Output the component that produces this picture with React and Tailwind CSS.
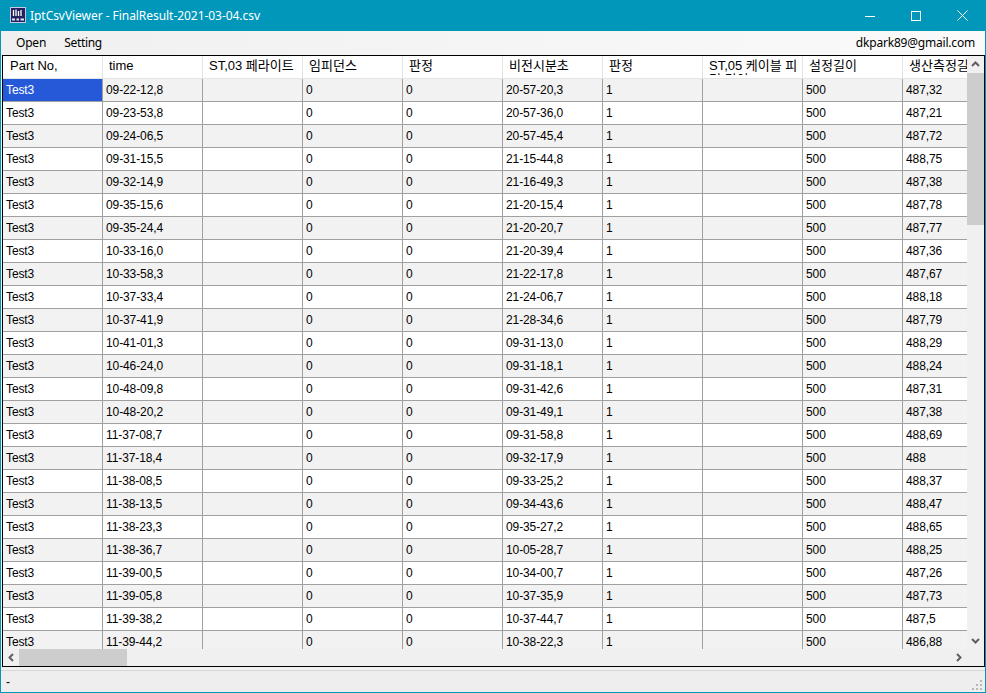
const COLS = ['Part No,', 'time', 'ST,03 페라이트', '임피던스', '판정', '비전시분초', '판정', 'ST,05 케이블 피더 길이', '설정길이', '생산측정길이'];

const ROWS = [
  ['09-22-12,8', '20-57-20,3', '487,32'],
  ['09-23-53,8', '20-57-36,0', '487,21'],
  ['09-24-06,5', '20-57-45,4', '487,72'],
  ['09-31-15,5', '21-15-44,8', '488,75'],
  ['09-32-14,9', '21-16-49,3', '487,38'],
  ['09-35-15,6', '21-20-15,4', '487,78'],
  ['09-35-24,4', '21-20-20,7', '487,77'],
  ['10-33-16,0', '21-20-39,4', '487,36'],
  ['10-33-58,3', '21-22-17,8', '487,67'],
  ['10-37-33,4', '21-24-06,7', '488,18'],
  ['10-37-41,9', '21-28-34,6', '487,79'],
  ['10-41-01,3', '09-31-13,0', '488,29'],
  ['10-46-24,0', '09-31-18,1', '488,24'],
  ['10-48-09,8', '09-31-42,6', '487,31'],
  ['10-48-20,2', '09-31-49,1', '487,38'],
  ['11-37-08,7', '09-31-58,8', '488,69'],
  ['11-37-18,4', '09-32-17,9', '488'],
  ['11-38-08,5', '09-33-25,2', '488,37'],
  ['11-38-13,5', '09-34-43,6', '488,47'],
  ['11-38-23,3', '09-35-27,2', '488,65'],
  ['11-38-36,7', '10-05-28,7', '488,25'],
  ['11-39-00,5', '10-34-00,7', '487,26'],
  ['11-39-05,8', '10-37-35,9', '487,73'],
  ['11-39-38,2', '10-37-44,7', '487,5'],
  ['11-39-44,2', '10-38-22,3', '486,88'],
];

function Cell({ children, selected }) {
  return (
    <div className={`w-[100px] h-[22px] shrink-0 border-r border-[#a0a0a0] pl-[3px] leading-[22px] tracking-[-0.1px] whitespace-nowrap overflow-hidden ${selected ? 'bg-[#2559d8] text-white' : ''}`}>
      {children}
    </div>
  );
}

function Chevron({ d }) {
  return (
    <svg width="9" height="9" viewBox="0 0 9 9">
      <path d={d} fill="none" stroke="#606060" strokeWidth="2" />
    </svg>
  );
}

export default function App() {
  return (
    <div className="w-[986px] h-[693px] overflow-hidden flex flex-col border border-[#0097bb] border-t-0 bg-[#f0f0f0] text-xs text-black font-['Liberation_Sans','Noto_Sans_CJK_KR',sans-serif]">
      <div className="h-[31px] shrink-0 -mx-px bg-[#0097bb] flex items-center text-white">
        <svg width="16" height="16" viewBox="0 0 16 16" className="ml-[10px] mr-[4px] mb-px">
          <rect x="0.5" y="0.5" width="15" height="15" fill="#23235f" stroke="#c8c8e0" />
          <path d="M3.5 9V3M6 9V2.5M8.5 9V4M11 9V3" stroke="#fff" strokeWidth="1.3" />
          <path d="M2 12.5h3M6.5 12.5h2.5M10.5 12.5h3.5" stroke="#dfe6ff" strokeWidth="2" />
        </svg>
        <span className="font-['Noto_Sans',sans-serif] text-[12px] tracking-[-0.05px]">IptCsvViewer - FinalResult-2021-03-04.csv</span>
        <div className="ml-auto flex items-center h-full mr-px">
          <div className="w-[46px] h-full flex items-center justify-center">
            <svg width="10" height="10" viewBox="0 0 10 10"><path d="M0 5.5h10" stroke="#fff" /></svg>
          </div>
          <div className="w-[46px] h-full flex items-center justify-center">
            <svg width="10" height="10" viewBox="0 0 10 10"><rect x="0.5" y="0.5" width="9" height="9" fill="none" stroke="#fff" /></svg>
          </div>
          <div className="w-[46px] h-full flex items-center justify-center">
            <svg width="11" height="11" viewBox="0 0 11 11"><path d="M0.5 0.5l10 10M10.5 0.5l-10 10" stroke="#fff" /></svg>
          </div>
        </div>
      </div>

      <div className="h-[24px] shrink-0 flex items-center bg-gradient-to-r from-[#f0f0f0] to-[#fafafa] font-['Noto_Sans',sans-serif] tracking-[-0.2px]">
        <span className="ml-[15px]">Open</span>
        <span className="ml-[18px] tracking-[-0.3px]">Setting</span>
        <span className="ml-auto mr-[10px]">dkpark89@gmail.com</span>
      </div>

      <div className="ml-px h-[612px] shrink-0 flex flex-col border border-black bg-[#f0f0f0]">
        <div className="flex flex-1 min-h-0">
          <div className="flex-1 min-w-0 overflow-hidden bg-white">
            <div className="flex h-[23px] border-b border-[#e4e4e4]">
              {COLS.map((c, i) => (
                <div key={c} className={`w-[100px] h-[22px] shrink-0 border-r border-[#e4e4e4] pr-[3px] pt-[3px] ${i === 0 ? 'pl-[7px]' : 'pl-[6px]'}`}>
                  <div className="h-[16px] overflow-hidden text-[13px] leading-[14px]">{c}</div>
                </div>
              ))}
            </div>
            {ROWS.map((r, i) => (
              <div key={r[0]} className={`flex h-[23px] border-b border-[#a0a0a0] ${i % 2 === 0 ? 'bg-[#f2f2f2]' : 'bg-white'}`}>
                <Cell selected={i === 0}>Test3</Cell>
                <Cell>{r[0]}</Cell>
                <Cell />
                <Cell>0</Cell>
                <Cell>0</Cell>
                <Cell>{r[1]}</Cell>
                <Cell>1</Cell>
                <Cell />
                <Cell>500</Cell>
                <Cell>{r[2]}</Cell>
              </div>
            ))}
          </div>
          <div className="w-[17px] shrink-0 flex flex-col bg-[#f0f0f0]">
            <div className="h-[17px] flex items-center justify-center"><Chevron d="M1 6l3.5-3.5L8 6" /></div>
            <div className="flex-1">
              <div className="h-[152px] bg-[#cdcdcd]" />
            </div>
            <div className="h-[17px] flex items-center justify-center"><Chevron d="M1 3l3.5 3.5L8 3" /></div>
          </div>
        </div>
        <div className="h-[17px] shrink-0 flex items-center bg-[#f0f0f0]">
          <div className="w-[16px] flex items-center justify-center"><Chevron d="M6 1L2.5 4.5L6 8" /></div>
          <div className="w-[108px] h-full bg-[#cdcdcd]" />
          <div className="ml-auto mr-[17px] w-[17px] flex items-center justify-center"><Chevron d="M3 1l3.5 3.5L3 8" /></div>
        </div>
      </div>

      <div className="flex-1 mt-[3px] border-t border-[#d8d8d8] flex items-center justify-between bg-[#eeeeee] pl-[5px] pr-[2px]">
        <span>-</span>
        <svg width="12" height="12" viewBox="0 0 12 12" className="mt-[6px]">
          <path d="M9 1h2v2H9zM5 5h2v2H5zM9 5h2v2H9zM1 9h2v2H1zM5 9h2v2H5zM9 9h2v2H9z" fill="#b8b8b8" />
        </svg>
      </div>
    </div>
  );
}
